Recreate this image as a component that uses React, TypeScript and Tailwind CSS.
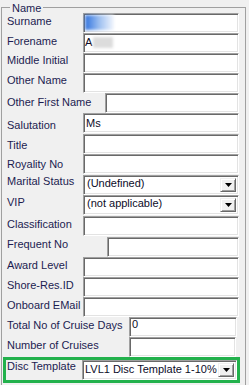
import React from "react";

type Row = {
  label: string;
  h: string; // row height
  lt: string; // label top offset
  lw: string; // label width (decides where the box starts)
  pr?: string;
  kind?: "text" | "select";
  value?: string;
  vt?: string;
  blur?: "surname" | "forename";
};

const rows: Row[] = [
  { label: "Surname", h: "h-[20px]", lt: "pt-[2px]", lw: "w-[76px]", blur: "surname" },
  { label: "Forename", h: "h-[20px]", lt: "pt-[2px]", lw: "w-[76px]", blur: "forename" },
  { label: "Middle Initial", h: "h-[20px]", lt: "pt-[1px]", lw: "w-[76px]" },
  { label: "Other Name", h: "h-[20px]", lt: "pt-[1px]", lw: "w-[76px]" },
  { label: "Other First Name", h: "h-[20px]", lt: "pt-[3px]", lw: "w-[98px]" },
  { label: "Salutation", h: "h-[21px]", lt: "pt-[6px]", lw: "w-[76px]", value: "Ms", vt: "pt-[3px]" },
  { label: "Title", h: "h-[20px]", lt: "pt-[5px]", lw: "w-[76px]" },
  { label: "Royality No", h: "h-[21px]", lt: "pt-[4px]", lw: "w-[76px]" },
  { label: "Marital Status", h: "h-[20px]", lt: "pt-0", lw: "w-[76px]", kind: "select", value: "(Undefined)" },
  { label: "VIP", h: "h-[21px]", lt: "pt-[1px]", lw: "w-[76px]", kind: "select", value: "(not applicable)" },
  { label: "Classification", h: "h-[21px]", lt: "pt-[2px]", lw: "w-[76px]" },
  { label: "Frequent No", h: "h-[20px]", lt: "pt-[1px]", lw: "w-[100px]" },
  { label: "Award Level", h: "h-[20px]", lt: "pt-[2px]", lw: "w-[76px]" },
  { label: "Shore-Res.ID", h: "h-[20px]", lt: "pt-[2px]", lw: "w-[76px]" },
  { label: "Onboard EMail", h: "h-[20px]", lt: "pt-[2px]", lw: "w-[76px]" },
  { label: "Total No of Cruise Days", h: "h-[20px]", lt: "pt-[2px]", lw: "w-[122px]", pr: "pr-[8px]", value: "0", vt: "pt-0 leading-[11px]" },
  { label: "Number of Cruises", h: "h-[20px]", lt: "pt-[2px]", lw: "w-[122px]", pr: "pr-[9px]" },
];

// sunken win32 edit border
const sunken =
  "border border-t-[#a0a0a0] border-l-[#a0a0a0] border-r-white border-b-white shadow-[inset_1px_1px_0_#696969,inset_-1px_-1px_0_#e3e3e3]";

function DropButton() {
  return (
    <div className="my-[2px] mr-[2px] w-[16px] flex items-center justify-center bg-[#f0f0f0] border border-t-[#f0f0f0] border-l-[#f0f0f0] border-r-[#696969] border-b-[#696969] shadow-[inset_1px_1px_0_#fff,inset_-1px_-1px_0_#a0a0a0]">
      <svg width="7" height="4" viewBox="0 0 7 4">
        <polygon points="0,0 7,0 3.5,4" fill="#000" />
      </svg>
    </div>
  );
}

function Field({ row }: { row: Row }) {
  if (row.kind === "select") {
    return (
      <div className={`flex-1 h-[20px] bg-white flex ${sunken}`}>
        <div className="flex-1 pl-[3px] pt-[1px] leading-[13px] text-[#0c0c28] whitespace-nowrap overflow-hidden">
          {row.value}
        </div>
        <DropButton />
      </div>
    );
  }
  return (
    <div className={`flex-1 h-[20px] bg-white ${sunken}`}>
      {row.blur === "surname" && (
        <div className="ml-[1px] mt-[1px] w-[29px] h-[15px] bg-gradient-to-r from-[#2f72dd] via-[#9fc0f0] to-[#f4f7fc] blur-[1.5px]" />
      )}
      {row.blur === "forename" && (
        <div className="flex items-start pl-[1px] pt-[2px] leading-[13px] text-[#0c0c28]">
          <span>A</span>
          <div className="ml-[1px] mt-[1px] w-[20px] h-[11px] bg-[#dcdcdc] blur-[1.5px]" />
        </div>
      )}
      {row.value && (
        <div className={`pl-[2px] leading-[13px] text-[#0c0c28] ${row.vt ?? "pt-0"}`}>{row.value}</div>
      )}
    </div>
  );
}

export default function App() {
  return (
    <div className="w-[249px] h-[385px] overflow-hidden bg-[#f0f0f0] text-[11px] font-['Liberation_Sans',Arial,sans-serif] pt-[7px]">
      {/* Name group box */}
      <div className="relative ml-[1px] w-[245px] h-[400px] border border-b-0 border-[#a0a0a0] pt-[5px]">
        <span className="absolute left-[8px] top-[-6px] px-[2px] bg-[#f0f0f0] leading-[13px] text-[#1c1c50]">
          Name
        </span>

        {rows.map((row) => (
          <div key={row.label} className={`flex items-start pl-[5px] ${row.pr ?? "pr-[6px]"} ${row.h}`}>
            <div className={`${row.lw} shrink-0 leading-[13px] whitespace-nowrap text-[#1c1c50] ${row.lt}`}>
              {row.label}
            </div>
            <Field row={row} />
          </div>
        ))}

        {/* highlighted disc template row */}
        <div className="ml-[1px] w-[237px] h-[26px] border-[3px] border-[#22b14c] flex items-start">
          <div className="w-[76px] shrink-0 pl-[1px] pt-0 leading-[13px] whitespace-nowrap text-[#1c1c50]">
            Disc Template
          </div>
          <div className={`flex-1 h-[20px] bg-white flex ${sunken}`}>
            <div className="flex-1 pl-[2px] pt-[2px] leading-[13px] text-[#0c0c28] whitespace-nowrap overflow-hidden">
              LVL1 Disc Template 1-10%
            </div>
            <DropButton />
          </div>
        </div>
      </div>
    </div>
  );
}
